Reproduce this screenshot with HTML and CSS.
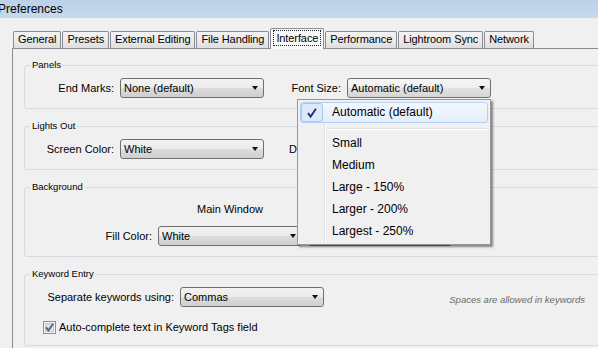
FILE: index.html
```html
<!DOCTYPE html>
<html lang="en">
<head>
    <meta charset="UTF-8">
    <title>Preferences</title>
    <link rel="stylesheet" href="styles.css">
</head>
<body>
<div class="window">
    <div class="titlebar">Preferences</div>

    <ul class="tabs">
        <li class="tab">General</li>
        <li class="tab">Presets</li>
        <li class="tab">External Editing</li>
        <li class="tab">File Handling</li>
        <li class="tab active"><span class="focus">Interface</span></li>
        <li class="tab">Performance</li>
        <li class="tab">Lightroom Sync</li>
        <li class="tab">Network</li>
    </ul>

    <div class="panel">
        <fieldset class="group">
            <legend>Panels</legend>
            <div class="row">
                <label class="lbl lbl-short">End Marks:</label>
                <div class="combo"><span class="value">None (default)</span></div>
                <label class="lbl lbl-second">Font Size:</label>
                <div class="combo open">
                    <span class="value">Automatic (default)</span>
                    <div class="menu">
                        <div class="menu-item checked">
                            <span class="check">
                                <svg width="12" height="12" viewBox="0 0 12 12"><path d="M2 6.2 L4.6 9.6 L10 1.8" fill="none" stroke="#1d3279" stroke-width="1.9"/></svg>
                            </span>
                            Automatic (default)
                        </div>
                        <div class="menu-sep"></div>
                        <div class="menu-item">Small</div>
                        <div class="menu-item">Medium</div>
                        <div class="menu-item">Large - 150%</div>
                        <div class="menu-item">Larger - 200%</div>
                        <div class="menu-item">Largest - 250%</div>
                    </div>
                </div>
            </div>
        </fieldset>

        <fieldset class="group">
            <legend>Lights Out</legend>
            <div class="row">
                <label class="lbl lbl-short">Screen Color:</label>
                <div class="combo"><span class="value">White</span></div>
                <label class="lbl lbl-second">Dim Level:</label>
                <div class="combo"><span class="value"></span></div>
            </div>
        </fieldset>

        <fieldset class="group">
            <legend>Background</legend>
            <div class="row head-row">
                <span class="lbl lbl-mid"></span>
                <span class="col-head">Main Window</span>
            </div>
            <div class="row fill-row">
                <label class="lbl lbl-mid">Fill Color:</label>
                <div class="combo"><span class="value">White</span></div>
                <div class="combo second"><span class="value"></span></div>
            </div>
        </fieldset>

        <fieldset class="group">
            <legend>Keyword Entry</legend>
            <div class="row">
                <label class="lbl lbl-long">Separate keywords using:</label>
                <div class="combo"><span class="value">Commas</span></div>
                <span class="hint">Spaces are allowed in keywords</span>
            </div>
            <div class="check-row">
                <svg width="13" height="13" viewBox="0 0 13 13">
                    <rect x="0.5" y="0.5" width="12" height="12" fill="#f6f6f6" stroke="#8e8f8f"/>
                    <rect x="2.5" y="2.5" width="8" height="8" fill="#e2e2e2" stroke="#c6c6c6"/>
                    <path d="M3 6.4 L5.4 9.4 L10 2.8" fill="none" stroke="#4a5f97" stroke-width="1.8"/>
                </svg>
                <span>Auto-complete text in Keyword Tags field</span>
            </div>
        </fieldset>
    </div>
</div>
</body>
</html>
```

FILE: styles.css
```css
*{
    box-sizing: border-box;
}
html, body{
    margin: 0;
}
body{
    width: 598px;
    height: 348px;
    overflow: hidden;
    background: #f0f0f0;
    font-family: "Liberation Sans", Arial, sans-serif;
    font-size: 11px;
    color: #000;
}
.window{
    width: 618px;
}
.titlebar{
    height: 18px;
    line-height: 18px;
    font-size: 12px;
    text-indent: -2px;
    background: linear-gradient(#bcd0e8, #c8d9ee);
}

/* tabs */
.tabs{
    display: flex;
    align-items: flex-end;
    list-style: none;
    height: 17px;
    margin: 13px 0 0 13px;
    padding: 0;
    position: relative;
    z-index: 1;
    letter-spacing: -0.1px;
}
.tab{
    height: 17px;
    line-height: 15px;
    padding: 0 4px;
    margin-right: 1px;
    border: 1px solid #898c95;
    border-bottom: 0;
    border-radius: 2px 2px 0 0;
    background: linear-gradient(#f3f3f3, #ebebeb 50%, #dedede);
}
.tab.active{
    height: 21px;
    margin-bottom: -1px;
    padding: 1px 2px 0;
    background: #f9f9f9;
}
.focus{
    display: inline-block;
    padding: 0 2px;
    line-height: 14px;
    border: 1px dotted #222;
}

.panel{
    height: 320px;
    margin-left: 12px;
    padding: 10px 11px 0;
    border: 1px solid #898c95;
    background: #f0f0f0;
}

/* group boxes */
.group{
    min-width: 0;
    margin: 0 0 11px;
    padding: 7px 0 10px;
    border: 1px solid #d5dbe0;
    border-radius: 3px;
}
.group legend{
    margin-left: 5px;
    padding: 0 2px;
    font-size: 9.5px;
    line-height: 12px;
}
.row{
    display: flex;
    align-items: center;
}
.lbl{
    flex: none;
    margin-right: 6px;
    text-align: right;
}
.lbl-short{
    width: 89px;
}
.lbl-second{
    width: 71px;
    margin-left: 6px;
}
.lbl-mid{
    width: 127px;
}
.lbl-long{
    width: 149px;
}

/* combo boxes */
.combo{
    display: flex;
    align-items: center;
    flex: none;
    width: 144px;
    height: 20px;
    padding: 0 5px 0 3px;
    border: 1px solid #707070;
    border-radius: 3px;
    background: linear-gradient(#f2f2f2, #ebebeb 50%, #dddddd 50%, #cfcfcf);
}
.combo .value{
    flex: 1;
    white-space: nowrap;
    overflow: hidden;
}
.combo::after{
    content: "";
    width: 0;
    height: 0;
    border-left: 3.5px solid transparent;
    border-right: 3.5px solid transparent;
    border-top: 4px solid #111;
}
.combo.second{
    margin-left: 6px;
}
.combo.open{
    position: relative;
    background: linear-gradient(#f6f6f6, #eeeeee 50%, #e2e2e2 50%, #d6d6d6);
}

.head-row{
    height: 18px;
}
.col-head{
    width: 144px;
    text-align: center;
}
.fill-row{
    margin-top: 8px;
}

.hint{
    margin: 4px 20px 0 auto;
    font-size: 9.5px;
    font-style: italic;
    color: #6a6a6a;
}
.check-row{
    display: flex;
    align-items: center;
    gap: 3px;
    height: 16px;
    margin: 12px 0 0 18px;
}

/* dropdown list of Font Size */
.menu{
    position: absolute;
    left: -51px;
    top: 20px;
    z-index: 5;
    width: 194px;
    padding: 2px;
    border: 1px solid #979797;
    background: linear-gradient(90deg, transparent 26px, #e2e3e3 26px, #e2e3e3 27px, #fff 27px, #fff 28px, transparent 28px), #f0f0f0;
    box-shadow: 2px 2px 2px rgba(0, 0, 0, 0.45);
    font-size: 12px;
}
.menu-item{
    height: 22px;
    line-height: 22px;
    padding-left: 32px;
    white-space: nowrap;
}
.menu-item.checked{
    display: flex;
    align-items: center;
    height: 21px;
    line-height: 19px;
    padding-left: 0;
    border: 1px solid #b4d0f4;
    border-radius: 3px;
    background: linear-gradient(#f4f8fe, #e4eefb);
}
.check{
    display: flex;
    align-items: center;
    justify-content: center;
    flex: none;
    width: 22px;
    height: 19px;
    margin-right: 9px;
    border: 1px solid #a9c6ee;
    border-radius: 3px;
    background: #dde9f9;
}
.menu-sep{
    height: 2px;
    margin: 5px 0 2px 26px;
    border-top: 1px solid #e0e0e0;
    border-bottom: 1px solid #fff;
}
```
